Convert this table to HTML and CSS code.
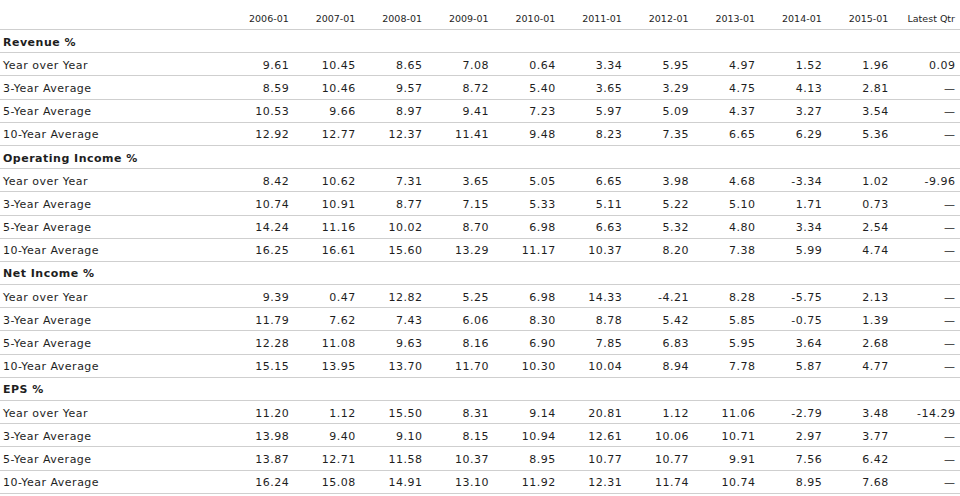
FILE: index.html
```html
<!DOCTYPE html>
<html>
<head>
<meta charset="utf-8">
<link rel="stylesheet" href="styles.css">
</head>
<body>
<table class="growth">
  <colgroup>
    <col class="c-label">
    <col class="c-num"><col class="c-num"><col class="c-num"><col class="c-num"><col class="c-num"><col class="c-num"><col class="c-num"><col class="c-num"><col class="c-num"><col class="c-num"><col class="c-num">
  </colgroup>
  <thead>
    <tr>
      <th class="lbl"></th>
      <th>2006-01</th><th>2007-01</th><th>2008-01</th><th>2009-01</th><th>2010-01</th><th>2011-01</th><th>2012-01</th><th>2013-01</th><th>2014-01</th><th>2015-01</th><th>Latest Qtr</th>
    </tr>
  </thead>
  <tbody>
    <tr class="sec"><td class="lbl">Revenue %</td><td></td><td></td><td></td><td></td><td></td><td></td><td></td><td></td><td></td><td></td><td></td></tr>
    <tr><td class="lbl">Year over Year</td><td>9.61</td><td>10.45</td><td>8.65</td><td>7.08</td><td>0.64</td><td>3.34</td><td>5.95</td><td>4.97</td><td>1.52</td><td>1.96</td><td>0.09</td></tr>
    <tr><td class="lbl">3-Year Average</td><td>8.59</td><td>10.46</td><td>9.57</td><td>8.72</td><td>5.40</td><td>3.65</td><td>3.29</td><td>4.75</td><td>4.13</td><td>2.81</td><td>—</td></tr>
    <tr><td class="lbl">5-Year Average</td><td>10.53</td><td>9.66</td><td>8.97</td><td>9.41</td><td>7.23</td><td>5.97</td><td>5.09</td><td>4.37</td><td>3.27</td><td>3.54</td><td>—</td></tr>
    <tr><td class="lbl">10-Year Average</td><td>12.92</td><td>12.77</td><td>12.37</td><td>11.41</td><td>9.48</td><td>8.23</td><td>7.35</td><td>6.65</td><td>6.29</td><td>5.36</td><td>—</td></tr>

    <tr class="sec"><td class="lbl">Operating Income %</td><td></td><td></td><td></td><td></td><td></td><td></td><td></td><td></td><td></td><td></td><td></td></tr>
    <tr><td class="lbl">Year over Year</td><td>8.42</td><td>10.62</td><td>7.31</td><td>3.65</td><td>5.05</td><td>6.65</td><td>3.98</td><td>4.68</td><td>-3.34</td><td>1.02</td><td>-9.96</td></tr>
    <tr><td class="lbl">3-Year Average</td><td>10.74</td><td>10.91</td><td>8.77</td><td>7.15</td><td>5.33</td><td>5.11</td><td>5.22</td><td>5.10</td><td>1.71</td><td>0.73</td><td>—</td></tr>
    <tr><td class="lbl">5-Year Average</td><td>14.24</td><td>11.16</td><td>10.02</td><td>8.70</td><td>6.98</td><td>6.63</td><td>5.32</td><td>4.80</td><td>3.34</td><td>2.54</td><td>—</td></tr>
    <tr><td class="lbl">10-Year Average</td><td>16.25</td><td>16.61</td><td>15.60</td><td>13.29</td><td>11.17</td><td>10.37</td><td>8.20</td><td>7.38</td><td>5.99</td><td>4.74</td><td>—</td></tr>

    <tr class="sec"><td class="lbl">Net Income %</td><td></td><td></td><td></td><td></td><td></td><td></td><td></td><td></td><td></td><td></td><td></td></tr>
    <tr><td class="lbl">Year over Year</td><td>9.39</td><td>0.47</td><td>12.82</td><td>5.25</td><td>6.98</td><td>14.33</td><td>-4.21</td><td>8.28</td><td>-5.75</td><td>2.13</td><td>—</td></tr>
    <tr><td class="lbl">3-Year Average</td><td>11.79</td><td>7.62</td><td>7.43</td><td>6.06</td><td>8.30</td><td>8.78</td><td>5.42</td><td>5.85</td><td>-0.75</td><td>1.39</td><td>—</td></tr>
    <tr><td class="lbl">5-Year Average</td><td>12.28</td><td>11.08</td><td>9.63</td><td>8.16</td><td>6.90</td><td>7.85</td><td>6.83</td><td>5.95</td><td>3.64</td><td>2.68</td><td>—</td></tr>
    <tr><td class="lbl">10-Year Average</td><td>15.15</td><td>13.95</td><td>13.70</td><td>11.70</td><td>10.30</td><td>10.04</td><td>8.94</td><td>7.78</td><td>5.87</td><td>4.77</td><td>—</td></tr>

    <tr class="sec"><td class="lbl">EPS %</td><td></td><td></td><td></td><td></td><td></td><td></td><td></td><td></td><td></td><td></td><td></td></tr>
    <tr><td class="lbl">Year over Year</td><td>11.20</td><td>1.12</td><td>15.50</td><td>8.31</td><td>9.14</td><td>20.81</td><td>1.12</td><td>11.06</td><td>-2.79</td><td>3.48</td><td>-14.29</td></tr>
    <tr><td class="lbl">3-Year Average</td><td>13.98</td><td>9.40</td><td>9.10</td><td>8.15</td><td>10.94</td><td>12.61</td><td>10.06</td><td>10.71</td><td>2.97</td><td>3.77</td><td>—</td></tr>
    <tr><td class="lbl">5-Year Average</td><td>13.87</td><td>12.71</td><td>11.58</td><td>10.37</td><td>8.95</td><td>10.77</td><td>10.77</td><td>9.91</td><td>7.56</td><td>6.42</td><td>—</td></tr>
    <tr><td class="lbl">10-Year Average</td><td>16.24</td><td>15.08</td><td>14.91</td><td>13.10</td><td>11.92</td><td>12.31</td><td>11.74</td><td>10.74</td><td>8.95</td><td>7.68</td><td>—</td></tr>
  </tbody>
</table>
</body>
</html>
```

FILE: styles.css
```css
html, body {
  margin: 0;
  padding: 0;
  background: #ffffff;
}

.growth {
  width: 960px;
  table-layout: fixed;
  border-collapse: separate;
  border-spacing: 0;
  font-family: "DejaVu Sans", Verdana, sans-serif;
  font-size: 11px;
  letter-spacing: 0.5px;
  color: #1e1e1e;
}

.c-label {
  width: 227px;
}

.c-num {
  width: 66.6px;
}

.growth th {
  height: 24px;
  padding: 0 5px 5px 0;
  vertical-align: bottom;
  text-align: right;
  font-weight: normal;
  font-size: 9.5px;
  letter-spacing: 0;
  white-space: nowrap;
  border-bottom: 1px solid #cfcfcf;
}

.growth td {
  height: 20.2px;
  padding: 2px 4.5px 0 0;
  vertical-align: middle;
  text-align: right;
  white-space: nowrap;
  border-bottom: 1px solid #cfcfcf;
}

.growth .lbl {
  text-align: left;
  padding-left: 3px;
}

.growth .sec .lbl {
  font-weight: bold;
}
```
